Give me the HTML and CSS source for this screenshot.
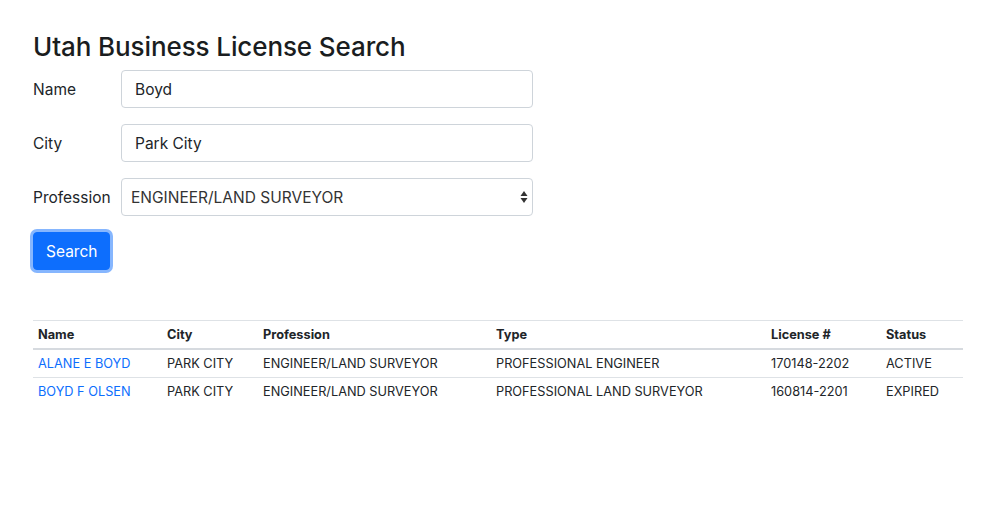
FILE: index.html
```html
<!DOCTYPE html>
<html lang="en">
<head>
<meta charset="utf-8">
<title>Utah Business License Search</title>
<link rel="stylesheet" href="styles.css">
</head>
<body>
<div class="page">
  <h1 class="title">Utah Business License Search</h1>
  <form class="search-form">
    <div class="form-row">
      <label class="form-label" for="name">Name</label>
      <input class="form-control" id="name" type="text" value="Boyd">
    </div>
    <div class="form-row">
      <label class="form-label" for="city">City</label>
      <input class="form-control" id="city" type="text" value="Park City">
    </div>
    <div class="form-row">
      <label class="form-label" for="prof">Profession</label>
      <div class="select-wrap">
        <select class="form-select" id="prof">
          <option>ENGINEER/LAND SURVEYOR</option>
        </select>
        <svg class="select-arrows" width="8" height="14" viewBox="0 0 8 14" aria-hidden="true">
          <path d="M4 1 L7.5 6 H0.5 Z" fill="#333"/>
          <path d="M4 13 L7.5 8 H0.5 Z" fill="#333"/>
        </svg>
      </div>
    </div>
    <div class="actions">
      <button class="btn" type="button">Search</button>
    </div>
  </form>

  <table class="results">
    <thead>
      <tr>
        <th class="c-name">Name</th>
        <th class="c-city">City</th>
        <th class="c-prof">Profession</th>
        <th class="c-type">Type</th>
        <th class="c-lic">License #</th>
        <th class="c-status">Status</th>
      </tr>
    </thead>
    <tbody>
      <tr>
        <td><a href="#">ALANE E BOYD</a></td>
        <td>PARK CITY</td>
        <td>ENGINEER/LAND SURVEYOR</td>
        <td>PROFESSIONAL ENGINEER</td>
        <td>170148-2202</td>
        <td>ACTIVE</td>
      </tr>
      <tr>
        <td><a href="#">BOYD F OLSEN</a></td>
        <td>PARK CITY</td>
        <td>ENGINEER/LAND SURVEYOR</td>
        <td>PROFESSIONAL LAND SURVEYOR</td>
        <td>160814-2201</td>
        <td>EXPIRED</td>
      </tr>
    </tbody>
  </table>
</div>
</body>
</html>
```

FILE: styles.css
```css
* { box-sizing: border-box; }

body {
  margin: 0;
  background: #fff;
  color: #212529;
  font-family: Inter, "Liberation Sans", sans-serif;
  font-size: 16px;
  line-height: 1.5;
}

.page {
  width: 930px;
  margin-left: 33px;
  padding-top: 29px;
}

.title {
  margin: 0 0 6px;
  padding-top: 1px;
  font-size: 26px;
  font-weight: 500;
  line-height: 1.3;
  letter-spacing: -0.1px;
  color: #1a1d20;
}

.search-form {
  width: 500px;
}

.form-row {
  display: flex;
  align-items: center;
  margin-bottom: 16px;
}

.form-label {
  width: 88px;
  flex: none;
  padding-top: 2px;
  font-size: 15.5px;
}

.form-control,
.form-select {
  width: 412px;
  height: 38px;
  padding: 7px 12px 5px 13px;
  border: 1px solid #ced4da;
  border-radius: 4px;
  font: inherit;
  font-size: 15.5px;
  color: #212529;
  background: #fff;
  outline: none;
}

.select-wrap {
  position: relative;
  width: 412px;
}

.form-select {
  -webkit-appearance: none;
  appearance: none;
  padding-left: 9px;
  color: #333;
}

.select-arrows {
  position: absolute;
  right: 5px;
  top: 12px;
  pointer-events: none;
}

.btn {
  height: 38px;
  padding: 2px 12px 0;
  border: 1px solid #0d6efd;
  border-radius: 4px;
  background: #0d6efd;
  color: #fff;
  font: inherit;
  font-size: 15.5px;
  box-shadow: 0 0 0 3px rgba(13, 110, 253, 0.5);
  cursor: pointer;
}

.results {
  width: 930px;
  margin-top: 50px;
  border-collapse: collapse;
  font-size: 12.75px;
  line-height: 20px;
  border-top: 1px solid #dee2e6;
}

.results th,
.results td {
  padding: 4px 5px;
  text-align: left;
  border-bottom: 1px solid #dee2e6;
}

.results td {
  line-height: 19px;
}

.results tbody tr:last-child td {
  border-bottom: 0;
}

.results th {
  font-weight: 700;
  padding-top: 4px;
  padding-bottom: 3px;
  border-bottom: 2px solid #d6dadf;
}

.results a {
  color: #0d6efd;
  text-decoration: none;
}

.c-name { width: 129px; }
.c-city { width: 96px; }
.c-prof { width: 233px; }
.c-type { width: 275px; }
.c-lic { width: 115px; }
```
